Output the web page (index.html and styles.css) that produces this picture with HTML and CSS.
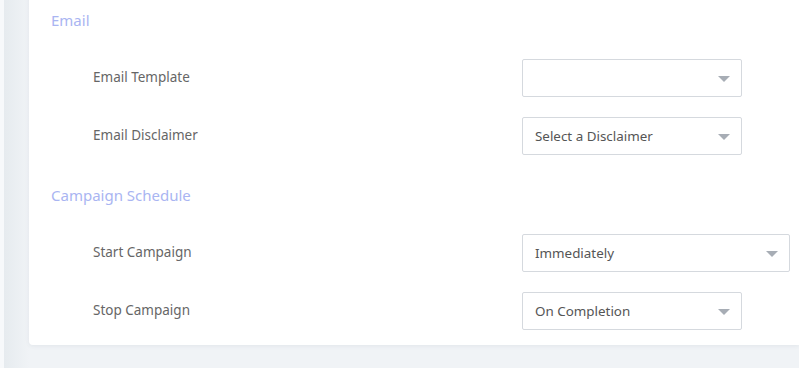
FILE: index.html
```html
<!DOCTYPE html>
<html lang="en">
<head>
  <meta charset="UTF-8">
  <title>Campaign Settings</title>
  <link rel="stylesheet" href="styles.css">
</head>
<body>
  <div class="page">
    <div class="card">
      <h3 class="section-title">Email</h3>
      <div class="rows">
        <div class="row">
          <label class="row-label">Email Template</label>
          <div class="select"><span class="select-value"></span><span class="caret"></span></div>
        </div>
        <div class="row">
          <label class="row-label">Email Disclaimer</label>
          <div class="select"><span class="select-value">Select a Disclaimer</span><span class="caret"></span></div>
        </div>
      </div>

      <h3 class="section-title">Campaign Schedule</h3>
      <div class="rows">
        <div class="row">
          <label class="row-label">Start Campaign</label>
          <div class="select select-wide"><span class="select-value">Immediately</span><span class="caret"></span></div>
        </div>
        <div class="row">
          <label class="row-label">Stop Campaign</label>
          <div class="select"><span class="select-value">On Completion</span><span class="caret"></span></div>
        </div>
      </div>
    </div>
  </div>
</body>
</html>
```

FILE: styles.css
```css
* {
  margin: 0;
  padding: 0;
  box-sizing: border-box;
}

body {
  background: #f0f3f6;
  font-family: 'Noto Sans', sans-serif;
}

.page {
  height: 368px;
  padding-left: 29px;
  overflow: hidden;
  background: linear-gradient(to right, #f7f9fb 0, #f7f9fb 4px, #e6ebef 4px, #f0f3f6 29px);
}

.card {
  margin-top: -20px;
  padding: 28px 0 15px 22px;
  background: #fff;
  border-radius: 4px 0 0 4px;
  box-shadow: 0 1px 4px rgba(60, 80, 100, 0.08);
}

.section-title {
  height: 24px;
  line-height: 24px;
  font-size: 15px;
  font-weight: normal;
  color: #a9b5f2;
}

.rows {
  display: flex;
  flex-direction: column;
  gap: 20px;
  margin-top: 27px;
  padding-left: 42px;
}

.rows + .section-title {
  margin-top: 28px;
}

.row {
  display: flex;
  align-items: center;
}

.row-label {
  width: 429px;
  margin-top: -2px;
  font-size: 13.5px;
  color: #666;
}

.select {
  position: relative;
  width: 220px;
  height: 38px;
  padding: 0 30px 0 12px;
  border: 1px solid #d5d9de;
  border-radius: 2px;
  display: flex;
  align-items: center;
  font-size: 13.4px;
  color: #555;
}

.select-wide {
  width: 268px;
}

.caret {
  position: absolute;
  right: 11px;
  top: 16px;
  width: 0;
  height: 0;
  border-left: 6px solid transparent;
  border-right: 6px solid transparent;
  border-top: 6px solid #a7adb5;
}
```
